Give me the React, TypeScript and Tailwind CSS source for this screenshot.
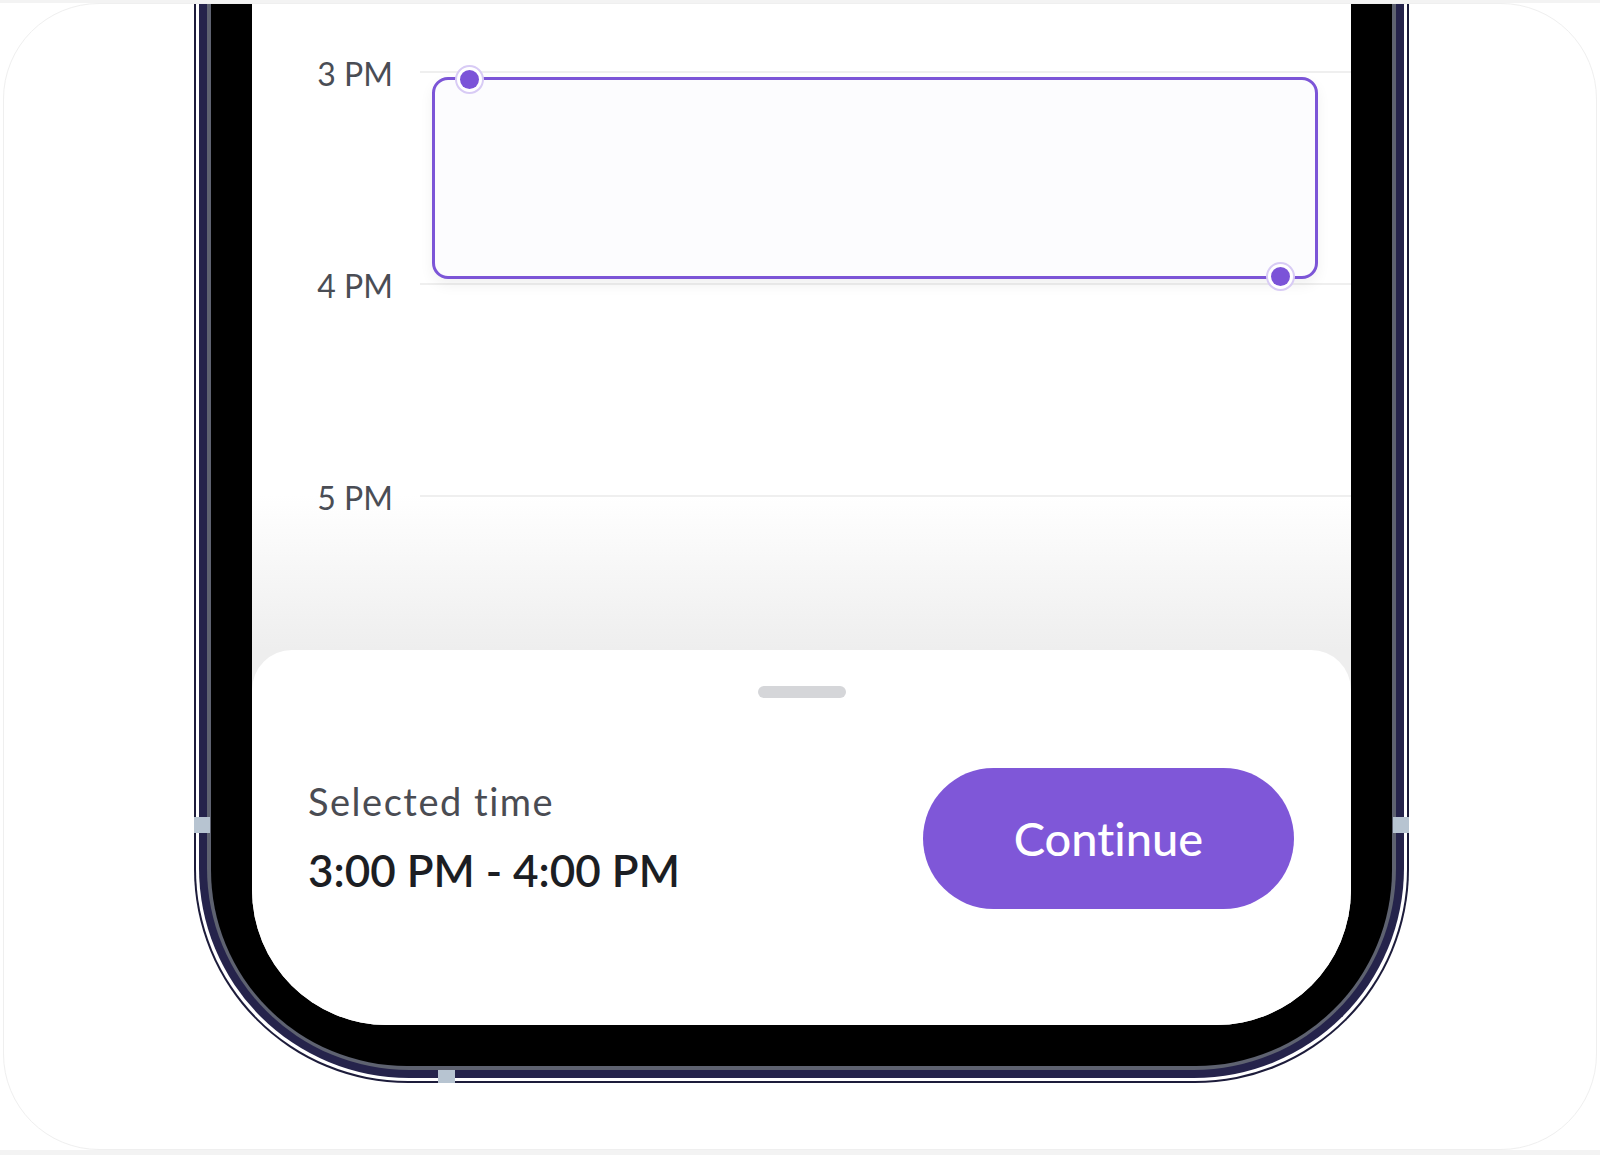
import React from 'react';

const HOURS = ['3 PM', '4 PM', '5 PM'];

const Handle: React.FC<{ className: string }> = ({ className }) => (
  <div className={`absolute w-[29px] h-[29px] rounded-full bg-white border-2 border-[#d8cbf5] flex items-center justify-center ${className}`}>
    <div className="w-[19px] h-[19px] rounded-full bg-[#7b53d8]" />
  </div>
);

const Timeline: React.FC = () => (
  <div className="relative h-[646px] bg-gradient-to-b from-white from-[76%] to-[#eeeeee]">
    <div className="flex flex-col gap-[180px] pt-[52px]">
      {HOURS.map(h => (
        <div key={h} className="flex items-center h-[32px]">
          <div className="w-[141px] pt-[3px] text-right text-[32px] leading-[32px] text-[#4a4d55] whitespace-nowrap">{h}</div>
          <div className="ml-[27px] flex-1 h-[2px] bg-[#efefef]" />
        </div>
      ))}
    </div>

    {/* selected slot */}
    <div className="absolute left-[180px] top-[73px] w-[886px] h-[202px] rounded-[16px] border-[3px] border-[#7c55d7] bg-[#fcfcfe] shadow-[0_6px_14px_rgba(0,0,0,0.06)]" />
    <Handle className="left-[203px] top-[61px]" />
    <Handle className="left-[1014px] top-[258px]" />
  </div>
);

const BottomSheet: React.FC = () => (
  <div className="flex-1 bg-white rounded-t-[40px] flex flex-col">
    <div className="mt-[36px] mx-auto w-[88px] h-[12px] rounded-full bg-[#d5d6d9]" />
    <div className="mt-[70px] pl-[56px] pr-[57px] flex justify-between items-start">
      <div className="pt-[10px]">
        <div className="text-[38px] leading-[46px] tracking-[0.04em] text-[#4a4c53]">Selected time</div>
        <div className="mt-[20px] text-[44px] leading-[53px] font-semibold text-[#1c1e23] whitespace-nowrap">3:00 PM - 4:00 PM</div>
      </div>
      <button className="w-[371px] h-[141px] rounded-full bg-[#7f57d8] text-white text-[47px] font-medium">
        Continue
      </button>
    </div>
  </div>
);

const App: React.FC = () => {
  return (
    <div
      className="w-[1600px] h-[1155px] bg-white border-t-[3px] border-b-[5px] border-[#f3f3f3] px-[3px] [font-variant-ligatures:none]"
      style={{ fontFamily: 'Lato, "Noto Sans", sans-serif' }}
    >
      <div className="h-[1147px] bg-white rounded-[96px] border border-[#efefef] overflow-hidden">
        {/* phone frame */}
        <div className="relative ml-[190px] w-[1215px] rounded-b-[214px] border-x-2 border-b-2 border-[#1d1c3b] bg-white px-[3px] pb-[3px]">
          <div className="rounded-b-[210px] border-x-8 border-b-8 border-[#25234b] bg-[#5e6270] px-[4px] pb-[4px]">
            <div className="rounded-b-[196px] bg-black px-[41px] pb-[41px]">
              <div className="h-[1021px] bg-[#eeeeee] rounded-b-[135px] overflow-hidden flex flex-col">
                <Timeline />
                <BottomSheet />
              </div>
            </div>
          </div>
          {/* antenna bands */}
          <div className="absolute left-[-2px] top-[813px] w-[16px] h-[16px] bg-[#b7c4d1]" />
          <div className="absolute right-[-2px] top-[813px] w-[16px] h-[16px] bg-[#b7c4d1]" />
          <div className="absolute left-[242px] bottom-[-2px] w-[17px] h-[13px] bg-[#b7c4d1]" />
        </div>
      </div>
    </div>
  );
};

export default App;
